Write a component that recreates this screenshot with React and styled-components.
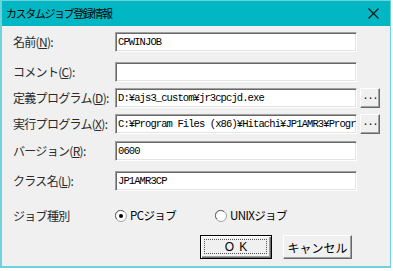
import React from 'react';
import styled, { createGlobalStyle } from 'styled-components';

const GlobalStyle = createGlobalStyle`
  html, body {
    margin: 0;
    padding: 0;
    background: #ffffff;
  }
  * {
    box-sizing: border-box;
  }
`;

const uiFont = `"Noto Sans CJK JP", "Liberation Sans", sans-serif`;
const monoFont = `"Liberation Mono", "Noto Sans CJK JP", monospace`;

const Window = styled.div`
  width: 391px;
  height: 268px;
  border: 1px solid #6fd1d9;
  border-left-width: 2px;
  border-bottom-width: 2px;
  background: #f0f0f0;
  display: flex;
  flex-direction: column;
  font-family: ${uiFont};
  color: #000;
`;

const TitleBar = styled.div`
  height: 25px;
  background: #00b7c3;
  display: flex;
  align-items: center;
  justify-content: space-between;
  padding: 0 11px 0 4px;
`;

const Title = styled.span`
  font-size: 11px;
  letter-spacing: -1.4px;
  line-height: 1;
`;

const Close = styled.svg`
  width: 11px;
  height: 11px;
`;

const Body = styled.div`
  flex: 1;
  display: flex;
  flex-direction: column;
  padding: 6px 0 0 11px;
`;

const Row = styled.div`
  display: flex;
  align-items: center;
  height: 20px;
  margin-top: ${p => p.$mt || 0}px;
`;

const Label = styled.span`
  width: 102px;
  font-size: 12px;
  letter-spacing: -0.7px;
  line-height: 1;
  white-space: nowrap;
  color: #2a2a2a;

  u {
    text-decoration-thickness: 1px;
    text-underline-offset: 1px;
  }
`;

const Field = styled.div`
  width: 242px;
  height: 20px;
  background: #fff;
  border: 1px solid;
  border-color: #a0a0a0 #ffffff #ffffff #a0a0a0;
  box-shadow: inset 1px 1px 0 #696969, inset -1px -1px 0 #e3e3e3;
  padding: 0 0 0 2px;
  display: flex;
  align-items: center;
  overflow: hidden;
  white-space: nowrap;
  font-family: ${monoFont};
  font-size: 10.5px;
  letter-spacing: -0.9px;
  color: #000;
`;

const Browse = styled.div`
  width: 20px;
  height: 20px;
  margin-left: 3px;
  background: #f0f0f0;
  border: 1px solid;
  border-color: #ffffff #696969 #696969 #ffffff;
  box-shadow: inset -1px -1px 0 #a0a0a0;
  font-family: ${monoFont};
  font-size: 10px;
  letter-spacing: -1px;
  display: flex;
  align-items: center;
  justify-content: center;
  padding-bottom: 3px;
`;

const TypeRow = styled.div`
  display: flex;
  align-items: center;
  height: 16px;
  margin-top: 17px;
`;

const RadioItem = styled.label`
  display: flex;
  align-items: center;
  gap: 3px;
  width: ${p => p.$w}px;
  font-size: 11.5px;
  line-height: 1;
`;

const RadioText = styled.span`
  letter-spacing: -0.6px;
`;

const ButtonRow = styled.div`
  display: flex;
  gap: 11px;
  margin: 11px 0 0 187px;
`;

const Button = styled.div`
  width: ${p => p.$w}px;
  height: 24px;
  background: #f0f0f0;
  border: 1px solid;
  border-color: ${p => (p.$default ? '#000' : '#ffffff #696969 #696969 #ffffff')};
  box-shadow: ${p =>
    p.$default
      ? 'inset 1px 1px 0 #ffffff, inset -1px -1px 0 #696969, inset -2px -2px 0 #a0a0a0'
      : 'inset -1px -1px 0 #a0a0a0'};
  display: flex;
  align-items: center;
  justify-content: center;
  font-size: 12px;
  position: relative;
`;

const FocusRing = styled.span`
  position: absolute;
  inset: 3px 4px 4px 3px;
  border: 1px dotted #555;
`;

const OkText = styled.span`
  letter-spacing: 5px;
  padding-left: 5px;
  font-family: "Liberation Sans", sans-serif;
`;

const Radio = ({ checked }) => (
  <svg width="12" height="12" viewBox="0 0 12 12">
    <circle cx="6" cy="6" r="5.5" fill="#fff" stroke="#a0a0a0" />
    <path d="M1.8 9 A5 5 0 0 1 9 1.8" fill="none" stroke="#696969" />
    {checked && <circle cx="6" cy="6" r="2" fill="#000" />}
  </svg>
);

const fields = [
  { label: '名前', key: 'N', value: 'CPWINJOB', mt: 0 },
  { label: 'コメント', key: 'C', value: '', mt: 10 },
  { label: '定義プログラム', key: 'D', value: 'D:¥ajs3_custom¥jr3cpcjd.exe', mt: 6, browse: true },
  { label: '実行プログラム', key: 'X', value: 'C:¥Program Files (x86)¥Hitachi¥JP1AMR3¥Progr', mt: 6, browse: true },
  { label: 'バージョン', key: 'R', value: '0600', mt: 7 },
  { label: 'クラス名', key: 'L', value: 'JP1AMR3CP', mt: 10 },
];

export default function App() {
  return (
    <>
      <GlobalStyle />
      <Window>
        <TitleBar>
          <Title>カスタムジョブ登録情報</Title>
          <Close viewBox="0 0 11 11">
            <path d="M0.5 0.5 L10.5 10.5 M10.5 0.5 L0.5 10.5" stroke="#111" strokeWidth="1.1" />
          </Close>
        </TitleBar>
        <Body>
          {fields.map(f => (
            <Row key={f.key} $mt={f.mt}>
              <Label>
                {f.label}(<u>{f.key}</u>):
              </Label>
              <Field>{f.value}</Field>
              {f.browse && <Browse>...</Browse>}
            </Row>
          ))}
          <TypeRow>
            <Label>ジョブ種別</Label>
            <RadioItem $w={100}>
              <Radio checked />
              <RadioText>PCジョブ</RadioText>
            </RadioItem>
            <RadioItem $w={100}>
              <Radio />
              <RadioText>UNIXジョブ</RadioText>
            </RadioItem>
          </TypeRow>
          <ButtonRow>
            <Button $w={72} $default>
              <FocusRing />
              <OkText>OK</OkText>
            </Button>
            <Button $w={69}>キャンセル</Button>
          </ButtonRow>
        </Body>
      </Window>
    </>
  );
}
